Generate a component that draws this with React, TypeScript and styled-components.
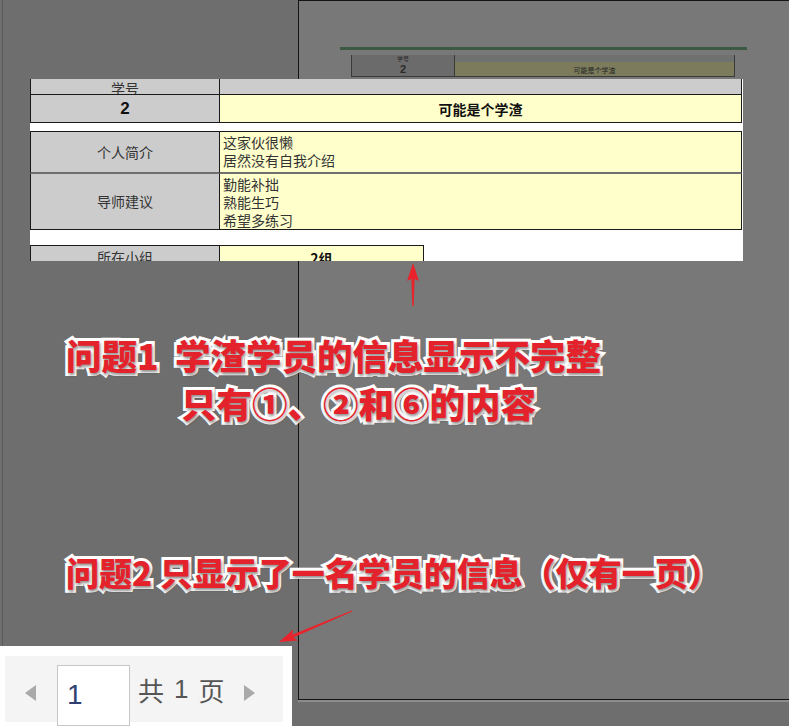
import React from 'react';
import styled, { createGlobalStyle } from 'styled-components';

/* Global */

const GlobalStyle = createGlobalStyle`
  *, *::before, *::after { box-sizing: border-box; }
  html, body { margin: 0; padding: 0; background: #6e6e6e; }
  body {
    font-family: "Noto Sans CJK SC", "Noto Sans", sans-serif;
    overflow: hidden;
  }
`;

/* Canvas and page preview */

const Stage = styled.div`
  position: relative;
  width: 789px;
  height: 726px;
  overflow: hidden;
  background: linear-gradient(
    to right,
    #6e6e6e 2px,
    #5b5b5b 2px,
    #5b5b5b 3px,
    #6e6e6e 3px
  );
`;

const PageFrame = styled.div`
  position: absolute;
  left: 298px;
  top: 0;
  width: 540px;
  height: 700px;
  border: 1px solid #141414;
  border-right: none;
  background: #787878;
  box-shadow: 0 2px 0 #8c8c8c;
  padding: 46px 0 0 41px;
`;

const GreenRule = styled.div`
  width: 407px;
  height: 3px;
  background: #3c5a41;
`;

const MiniTable = styled.div`
  margin: 5px 0 0 11px;
  width: 384px;
  height: 22px;
  display: grid;
  grid-template-columns: 103px 1fr;
  border: 1px solid #3a3a3a;
  border-top: none;
`;

const MiniLabel = styled.div`
  background: #6b6b6b;
  border-right: 1px solid #3a3a3a;
  display: flex;
  flex-direction: column;
  align-items: center;
  color: #2a2a2a;
  font-size: 6px;
  line-height: 8px;
  & > b {
    font-family: "Liberation Sans", Arial, sans-serif;
    font-size: 11px;
    line-height: 12px;
  }
`;

const MiniValue = styled.div`
  background: linear-gradient(#6f716f 0 7px, #7c7c5d 7px);
  display: flex;
  align-items: flex-end;
  justify-content: center;
  font-size: 7px;
  line-height: 12px;
  color: #222;
`;

/* Flow column over the canvas */

const Column = styled.div`
  position: relative;
  display: flex;
  flex-direction: column;
  align-items: flex-start;
  padding-top: 79px;
`;

/* Snapshot of the report table */

const Snapshot = styled.div`
  margin-left: 30px;
  width: 713px;
  height: 182px;
  background: #ffffff;
  overflow: hidden;
  display: flex;
  flex-direction: column;
`;

const Row = styled.div<{ $h: number; $top?: string; $bottom?: string; $value?: number }>`
  display: grid;
  grid-template-columns: 190px ${(p) => p.$value ?? 522}px;
  height: ${(p) => p.$h}px;
  flex-shrink: 0;
  font-size: 14px;
  color: #333;
  & > div {
    border-top: ${(p) => p.$top ?? 'none'};
    border-bottom: ${(p) => p.$bottom ?? 'none'};
  }
`;

const Gap = styled.div<{ $h: number }>`
  height: ${(p) => p.$h}px;
  flex-shrink: 0;
`;

const Label = styled.div<{ $pt?: number }>`
  background: #cccccc;
  border-left: 1px solid #1a1a1a;
  border-right: 1px solid #1a1a1a;
  display: flex;
  align-items: ${(p) => (p.$pt !== undefined ? 'flex-start' : 'center')};
  justify-content: center;
  padding-top: ${(p) => p.$pt ?? 0}px;
  line-height: 15px;
  overflow: hidden;
`;

const Value = styled.div<{ $tone?: 'yellow' | 'gray'; $center?: boolean }>`
  background: ${(p) => (p.$tone === 'gray' ? '#cccccc' : '#ffffcc')};
  border-right: 1px solid #1a1a1a;
  display: flex;
  flex-direction: column;
  justify-content: ${(p) => (p.$center ? 'center' : 'flex-start')};
  align-items: ${(p) => (p.$center ? 'center' : 'flex-start')};
  padding: ${(p) => (p.$center ? '0' : '1px 3px')};
  line-height: 18px;
  overflow: hidden;
`;

const BigNum = styled.span`
  font-family: "Liberation Sans", Arial, sans-serif;
  font-weight: 700;
  font-size: 17px;
  color: #111;
`;

const Strong = styled.span`
  font-weight: 700;
  color: #111;
`;

/* Annotations */

const ArrowSvg = styled.svg<{ $left: number; $top: number }>`
  display: block;
  margin-left: ${(p) => p.$left}px;
  margin-top: ${(p) => p.$top}px;
`;

const Note = styled.div<{ $size: number; $lh: number; $top: number }>`
  margin-left: 66px;
  margin-top: ${(p) => p.$top}px;
  font-family: "Noto Sans CJK SC", sans-serif;
  font-weight: 900;
  font-size: ${(p) => p.$size}px;
  line-height: ${(p) => p.$lh}px;
  color: #e4222b;
  white-space: pre;
  -webkit-text-stroke: 6px #ffffff;
  paint-order: stroke fill;
  text-shadow: 1px 2px 3px rgba(0, 0, 0, 0.45);
`;

const NoteLine = styled.div<{ $indent?: number }>`
  padding-left: ${(p) => p.$indent ?? 0}px;
`;

/* Pager */

const PagerBox = styled.div`
  width: 292px;
  height: 80px;
  background: #ffffff;
  padding: 10px 9px 4px 5px;
`;

const PagerInner = styled.div`
  height: 66px;
  background: #f4f4f4;
  display: flex;
  align-items: center;
`;

const Caret = styled.span<{ $dir: 'left' | 'right'; $ml: number }>`
  width: 0;
  height: 0;
  margin-left: ${(p) => p.$ml}px;
  margin-top: 8px;
  border-top: 8px solid transparent;
  border-bottom: 8px solid transparent;
  ${(p) =>
    p.$dir === 'left'
      ? 'border-right: 11px solid #a9a9a9;'
      : 'border-left: 11px solid #a9a9a9;'}
`;

const PageInput = styled.div`
  margin-left: 21px;
  margin-top: 12px;
  width: 73px;
  height: 61px;
  background: #ffffff;
  border: 1px solid #c6c6c6;
  padding: 0 0 0 9px;
  display: flex;
  align-items: center;
  font-family: "Liberation Sans", Arial, sans-serif;
  font-size: 28px;
  color: #2f3f72;
`;

const PageTotal = styled.div`
  margin-left: 8px;
  display: flex;
  align-items: center;
  gap: 10px;
  font-size: 26px;
  color: #555555;
  & > span:nth-child(2) {
    font-family: "Liberation Sans", Arial, sans-serif;
  }
`;

const thin = '1px solid #1a1a1a';

export default function App() {
  return (
    <>
      <GlobalStyle />
      <Stage>
        <PageFrame>
          <GreenRule />
          <MiniTable>
            <MiniLabel>
              学号
              <b>2</b>
            </MiniLabel>
            <MiniValue>可能是个学渣</MiniValue>
          </MiniTable>
        </PageFrame>

        <Column>
          <Snapshot>
            <Row $h={16} $bottom={thin}>
              <Label $pt={2}>学号</Label>
              <Value $tone="gray" />
            </Row>
            <Row $h={28} $bottom={thin}>
              <Label>
                <BigNum>2</BigNum>
              </Label>
              <Value $center>
                <Strong>可能是个学渣</Strong>
              </Value>
            </Row>
            <Gap $h={8} />
            <Row $h={43} $top={thin} $bottom="2px solid #6f6f6f">
              <Label>个人简介</Label>
              <Value>
                <span>这家伙很懒</span>
                <span>居然没有自我介绍</span>
              </Value>
            </Row>
            <Row $h={56} $bottom={thin}>
              <Label>导师建议</Label>
              <Value>
                <span>勤能补拙</span>
                <span>熟能生巧</span>
                <span>希望多练习</span>
              </Value>
            </Row>
            <Gap $h={15} />
            <Row $h={24} $top={thin} $value={204}>
              <Label>所在小组</Label>
              <Value $center>
                <Strong>2组</Strong>
              </Value>
            </Row>
          </Snapshot>

          <ArrowSvg $left={398} $top={0} width="30" height="50" viewBox="0 0 30 50">
            <polygon
              points="15,2 21,20 16.6,18 15.7,45 14.3,45 13.4,18 9,20"
              fill="#e8232b"
            />
          </ArrowSvg>

          <Note $size={35.5} $lh={48} $top={20}>
            <NoteLine>{'问题1  学渣学员的信息显示不完整'}</NoteLine>
            <NoteLine $indent={115}>只有①、②和⑥的内容</NoteLine>
          </Note>

          <Note $size={33} $lh={44} $top={123}>
            <NoteLine>问题2 只显示了一名学员的信息（仅有一页）</NoteLine>
          </Note>

          <ArrowSvg $left={270} $top={6} width="90" height="46" viewBox="0 0 90 46">
            <polygon
              points="9,42 27.9,40.5 23.4,37.5 82.2,11.6 81.8,10.4 22.2,34.7 23.3,29.5"
              fill="#e8232b"
            />
          </ArrowSvg>

          <PagerBox>
            <PagerInner>
              <Caret $dir="left" $ml={20} />
              <PageInput>1</PageInput>
              <PageTotal>
                <span>共</span>
                <span>1</span>
                <span>页</span>
              </PageTotal>
              <Caret $dir="right" $ml={19} />
            </PagerInner>
          </PagerBox>
        </Column>
      </Stage>
    </>
  );
}
